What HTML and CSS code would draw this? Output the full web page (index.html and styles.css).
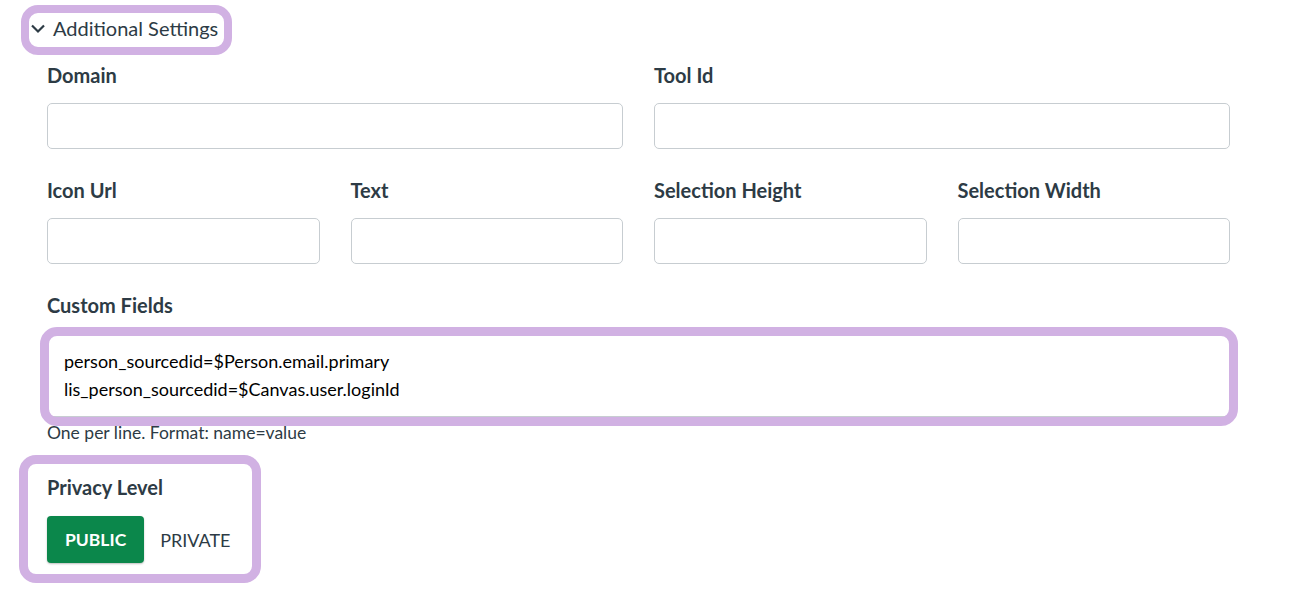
FILE: index.html
```html
<!DOCTYPE html>
<html lang="en">
<head>
	<meta charset="UTF-8">
	<title>Additional Settings</title>
	<link rel="stylesheet" href="styles.css">
</head>
<body>
	<div id="main_frame">
		<div class="toggle mark mark_head">
			<svg class="chevron" width="16" height="16" viewBox="0 0 16 16">
				<path d="M2 5.5 L8 11.5 L14 5.5" fill="none" stroke="#2d3b45" stroke-width="2.2"/>
			</svg>
			<span>Additional Settings</span>
		</div>

		<div class="fields">
			<div class="row two">
				<div class="field">
					<label>Domain</label>
					<input type="text">
				</div>
				<div class="field">
					<label>Tool Id</label>
					<input type="text">
				</div>
			</div>

			<div class="row four">
				<div class="field">
					<label>Icon Url</label>
					<input type="text">
				</div>
				<div class="field">
					<label>Text</label>
					<input type="text">
				</div>
				<div class="field">
					<label>Selection Height</label>
					<input type="text">
				</div>
				<div class="field">
					<label>Selection Width</label>
					<input type="text">
				</div>
			</div>

			<div class="field custom">
				<label>Custom Fields</label>
				<div class="area mark mark_area">person_sourcedid=$Person.email.primary<br>lis_person_sourcedid=$Canvas.user.loginId</div>
				<div class="hint">One per line. Format: name=value</div>
			</div>

			<div class="privacy mark mark_privacy">
				<label>Privacy Level</label>
				<div class="choices">
					<button class="btn on">PUBLIC</button>
					<button class="btn">PRIVATE</button>
				</div>
			</div>
		</div>
	</div>
</body>
</html>
```

FILE: styles.css
```css
* {
	margin: 0;
	padding: 0;
	box-sizing: border-box;
}

body {
	background: #fff;
	font-family: Lato, "Open Sans", sans-serif;
	color: #2d3b45;
}

#main_frame {
	padding: 14px 0 22px 30px;
	width: 1230px;
}

.mark {
	position: relative;
}
.mark::after {
	content: "";
	position: absolute;
	border: 9px solid #d1b1e3;
	border-radius: 17px;
	pointer-events: none;
}

.toggle {
	display: inline-flex;
	align-items: center;
	gap: 7px;
	font-size: 20px;
	height: 28px;
}
.mark_head::after {
	left: -9px;
	right: -14px;
	top: -9px;
	bottom: -13px;
	border-width: 8px;
}

.fields {
	margin-left: 17px;
	padding-top: 21px;
}

.row {
	display: grid;
	gap: 31px;
	margin-bottom: 29px;
}
.two {
	grid-template-columns: 1fr 1fr;
}
.four {
	grid-template-columns: 1fr 1fr 1fr 1fr;
}

.field label,
.privacy label {
	display: block;
	font-weight: bold;
	font-size: 20px;
	line-height: 24px;
	margin-bottom: 16px;
}

.field input {
	display: block;
	width: 100%;
	height: 46px;
	border: 1px solid #c7cdd1;
	border-radius: 5px;
	background: #fff;
}

.area {
	border: 1px solid #c7cdd1;
	border-radius: 5px;
	padding: 13px 16px 12px;
	font-size: 18px;
	line-height: 28px;
	color: #000;
	height: 84px;
}
.mark_area::after {
	left: -8px;
	right: -9px;
	top: -7px;
	bottom: -10px;
}

.hint {
	font-size: 17.5px;
	line-height: 20px;
	margin-top: 6px;
	color: #2d3b45;
}

.privacy {
	display: inline-block;
	margin-top: 32px;
}
.privacy label {
	margin-bottom: 17px;
}
.mark_privacy::after {
	left: -28px;
	right: -14px;
	top: -20px;
	bottom: -20px;
}

.choices {
	display: flex;
	align-items: center;
}

.btn {
	font-family: inherit;
	font-size: 18px;
	border: none;
	background: none;
	color: #2d3b45;
	height: 47px;
	padding: 0 16px;
	border-radius: 4px;
}
.btn.on {
	background: #0b874b;
	color: #fff;
	font-weight: bold;
	font-size: 17.5px;
	padding: 0 18px;
	box-shadow: 0 1px 2px rgba(0,0,0,0.25);
}
```
